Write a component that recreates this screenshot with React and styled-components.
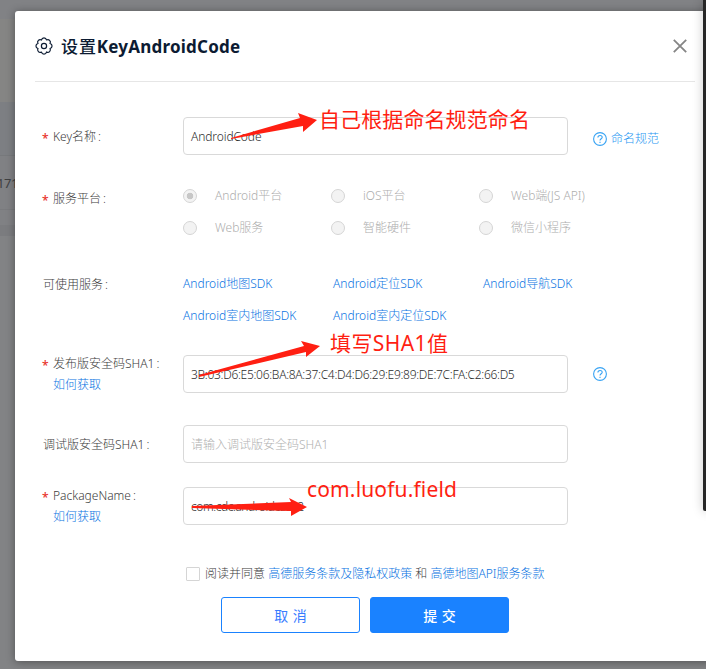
import React from 'react';
import styled, { createGlobalStyle } from 'styled-components';

const Global = createGlobalStyle`
  * { box-sizing: border-box; }
  html, body { margin: 0; overflow: hidden; }
  body {
    font: 300 12px/20px "Noto Sans", "Noto Sans CJK SC", sans-serif;
    color: #3c3c3c;
  }
`;

const Page = styled.div`
  position: relative;
  width: 706px;
  height: 669px;
  padding: 11px 0 0 15px;
  overflow: hidden;
  background: linear-gradient(#818285 0 19px, #858584 19px 102px, #7d7f83 102px 155px, #77797c 155px 156px, #808184 156px 209px, #7a7b7e 209px 210px, #808184 210px 225px, #7b7c7f 225px 236px, #828385 236px);
`;

const BackdropText = styled.span`
  position: absolute;
  left: -3px;
  top: 173px;
  font-size: 13px;
  font-weight: 400;
  letter-spacing: -0.4px;
  color: #3f4042;
`;

const ScreenEdge = styled.div`
  position: absolute;
  left: 703px;
  top: 0;
  width: 8px;
  height: 511px;
  border-radius: 0 0 0 2px;
  background: #272727;
  box-shadow: 0 0 11px rgba(0, 0, 0, 0.22);
`;

const Dialog = styled.section`
  position: relative;
  width: 700px;
  height: 650px;
  padding: 0 20px;
  border-radius: 3px;
  background: #fff;
  box-shadow: 0 1px 9px rgba(0, 0, 0, 0.38);
`;

const Header = styled.header`
  display: flex;
  align-items: center;
  width: 660px;
  height: 71px;
  padding-right: 8px;
  border-bottom: 1px solid #e6e6e6;
  color: #0c1b32;
`;

const Title = styled.h1`
  flex: 1;
  margin: 0 0 0 8px;
  padding-top: 2px;
  font-size: 17px;
  line-height: 24px;
  font-weight: 700;
  letter-spacing: 0.22px;
  span { font-weight: 500; letter-spacing: 0.9px; }
`;

const Form = styled.form`
  display: grid;
  grid-template-rows: 63px 88px 87px 70px 62px 77px 33px 36px;
  padding-top: 35px;
`;

const Row = styled.div`
  display: grid;
  grid-template-columns: 148px 385px 1fr;
  align-items: start;
`;

const Label = styled.div`
  margin-top: ${p => p.$top}px;
  padding-left: ${p => (p.$required ? 18 : 8)}px;
  line-height: 21px;
  white-space: nowrap;
  &::before {
    content: ${p => (p.$required ? "'*'" : 'none')};
    float: left;
    width: 11px;
    margin-left: -11px;
    padding-top: 2px;
    color: #e8322a;
    font-weight: 500;
  }
`;

const Colon = styled.span`
  margin-left: 2px;
`;

const Link = styled.a`
  color: #0a74e2;
  white-space: nowrap;
`;

const SubLine = styled.div`
  line-height: 22px;
`;

const Field = styled.div`
  height: 38px;
  padding: 0 7px;
  border: 1px solid #d9d9d9;
  border-radius: 4px;
  line-height: 37px;
  white-space: nowrap;
  color: ${p => (p.$placeholder ? '#b0b0b0' : '#2c2c2c')};
  letter-spacing: ${p => p.$track || 0}px;
`;

const Help = styled.div`
  display: flex;
  align-items: center;
  gap: 4px;
  height: ${p => p.$height}px;
  padding-left: 25px;
  color: #1e96f2;
`;

const Options = styled.div`
  display: grid;
  grid-template-columns: repeat(3, ${p => p.$column}px);
  grid-auto-rows: 32px;
  align-items: center;
`;

const Option = styled.div`
  display: flex;
  align-items: center;
  gap: 18px;
  color: #adadad;
  white-space: nowrap;
`;

const Radio = styled.span`
  width: 14px;
  height: 14px;
  border: 1px solid #d5d5d5;
  border-radius: 50%;
  background: ${p => (p.$checked ? 'radial-gradient(circle, #c7c7c7 0 3px, #f3f3f3 3.6px)' : '#f3f3f3')};
`;

const Agreement = styled.div`
  display: flex;
  align-items: center;
  height: 20px;
  padding-left: 151px;
  white-space: pre;
`;

const Checkbox = styled.span`
  width: 14px;
  height: 14px;
  margin-right: 5px;
  border: 1px solid #d5d5d5;
  border-radius: 1px;
`;

const Actions = styled.div`
  display: flex;
  gap: 10px;
  padding-left: 186px;
`;

const Button = styled.button`
  width: 139px;
  height: 36px;
  padding: 0;
  border: 1px solid #1a82ff;
  border-radius: 3px;
  background: ${p => (p.$primary ? '#1a82ff' : '#fff')};
  color: ${p => (p.$primary ? '#fff' : '#397cff')};
  font: ${p => (p.$primary ? 500 : 400)} 14px "Noto Sans", "Noto Sans CJK SC", sans-serif;
  word-spacing: 1px;
`;

const Note = styled.span`
  position: absolute;
  left: ${p => p.$x}px;
  top: ${p => p.$y}px;
  color: #ff1f12;
  font-size: 21px;
  font-weight: 400;
  line-height: 30px;
  letter-spacing: ${p => p.$track || 0}px;
  white-space: nowrap;
`;

const Arrows = styled.svg`
  position: absolute;
  left: 0;
  top: 0;
  fill: #ff1f12;
`;

const GearIcon = () => (
  <svg width="18" height="18" viewBox="0 0 18 18" fill="none" stroke="currentColor" strokeWidth="1.2" strokeLinejoin="round">
    <path d="M6.5 3A2.55 2.55 0 0 1 11.5 3A2.55 2.55 0 0 1 15 6.5A2.55 2.55 0 0 1 15 11.5A2.55 2.55 0 0 1 11.5 15A2.55 2.55 0 0 1 6.5 15A2.55 2.55 0 0 1 3 11.5A2.55 2.55 0 0 1 3 6.5A2.55 2.55 0 0 1 6.5 3Z" />
    <circle cx="9" cy="9" r="2.6" />
  </svg>
);

const CloseIcon = () => (
  <svg width="14" height="14" viewBox="0 0 14 14" stroke="#858585" strokeWidth="1.8">
    <path d="M.8.8 13.2 13.2M13.2.8.8 13.2" />
  </svg>
);

const HelpIcon = () => (
  <svg width="14" height="14" viewBox="0 0 14 14" fill="none" stroke="#38a3f3" strokeWidth="1.1">
    <circle cx="7" cy="7" r="6.4" />
    <path d="M4.9 5.5c0-2.7 4.3-2.7 4.3-.2C9.2 6.8 7 6.8 7 8.6" />
    <path d="M7 9.7v1.2" />
  </svg>
);

const platforms = ['Android平台', 'iOS平台', 'Web端(JS API)', 'Web服务', '智能硬件', '微信小程序'];
const services = ['Android地图SDK', 'Android定位SDK', 'Android导航SDK', 'Android室内地图SDK', 'Android室内定位SDK'];

export default function App() {
  return (
    <Page>
      <Global />
      <BackdropText>171</BackdropText>
      <Dialog>
        <Header>
          <GearIcon />
          <Title><span>设置</span>KeyAndroidCode</Title>
          <CloseIcon />
        </Header>
        <Form>
          <Row>
            <Label $required $top={9}>Key名称<Colon>:</Colon></Label>
            <Field $track={-0.1}>AndroidCode</Field>
            <Help $height={43}><HelpIcon />命名规范</Help>
          </Row>
          <Row>
            <Label $required $top={8}>服务平台<Colon>:</Colon></Label>
            <Options $column={148}>
              {platforms.map((name, i) => (
                <Option key={name}><Radio $checked={i === 0} />{name}</Option>
              ))}
            </Options>
          </Row>
          <Row>
            <Label $top={6}>可使用服务<Colon>:</Colon></Label>
            <Options $column={150}>
              {services.map(name => <Link key={name}>{name}</Link>)}
            </Options>
          </Row>
          <Row>
            <Label $required $top={-2}>
              发布版安全码SHA1<Colon>:</Colon>
              <SubLine><Link>如何获取</Link></SubLine>
            </Label>
            <Field $track={-0.3}>3B:03:D6:E5:06:BA:8A:37:C4:D4:D6:29:E9:89:DE:7C:FA:C2:66:D5</Field>
            <Help $height={38}><HelpIcon /></Help>
          </Row>
          <Row>
            <Label $top={9}>调试版安全码SHA1<Colon>:</Colon></Label>
            <Field $placeholder>请输入调试版安全码SHA1</Field>
          </Row>
          <Row>
            <Label $required $top={-2}>
              PackageName<Colon>:</Colon>
              <SubLine><Link>如何获取</Link></SubLine>
            </Label>
            <Field $track={-0.45}>com.cdc.androidcase2</Field>
          </Row>
          <Agreement>
            <Checkbox />阅读并同意 <Link>高德服务条款及隐私权政策</Link> 和 <Link>高德地图API服务条款</Link>
          </Agreement>
          <Actions>
            <Button type="button">取 消</Button>
            <Button type="button" $primary>提 交</Button>
          </Actions>
        </Form>
      </Dialog>
      <Arrows width="706" height="669" viewBox="0 0 706 669">
        <path d="M231 138 300 118 298 113 317 120 303 132 303 126 231 139Z" />
        <path d="M199 375 304 346 301 341 320 346 306 357 306 352 199 377Z" />
        <path d="M192 506 291 502 289 498 307 507 291 516 291 511 192 508Z" />
      </Arrows>
      <Note $x={319} $y={104} $track={0.1}>自己根据命名规范命名</Note>
      <Note $x={330} $y={328} $track={0.4}>填写SHA1值</Note>
      <Note $x={307} $y={474} $track={0.15}>com.luofu.field</Note>
      <ScreenEdge />
    </Page>
  );
}
